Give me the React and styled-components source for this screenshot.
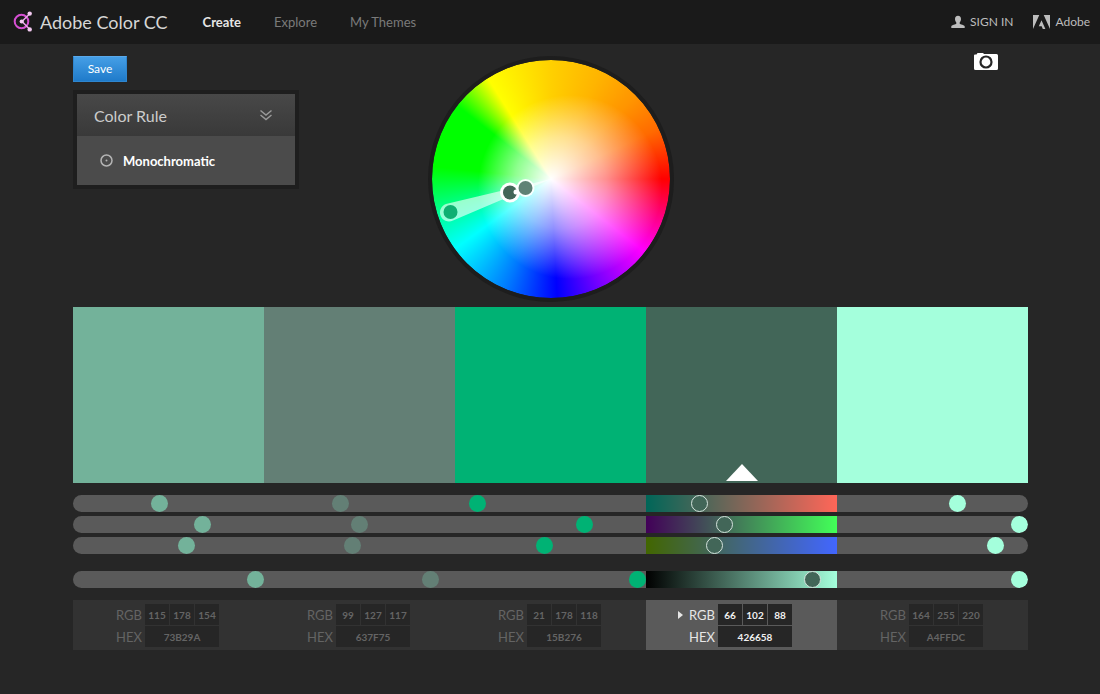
import React, { useState } from "react";
import styled, { createGlobalStyle, css } from "styled-components";

const GlobalStyle = createGlobalStyle`
  * {
    box-sizing: border-box;
  }

  body {
    margin: 0;
    background: #262626;
    color: #ccc;
    font-family: Lato, "Liberation Sans", sans-serif;
    font-size: 13px;
  }

  button, input {
    font-family: inherit;
  }
`

const initialColors = [
  { rgb: [115, 178, 154], hex: "73B29A", level: 100 },
  { rgb: [99, 127, 117], hex: "637F75", level: 91 },
  { rgb: [21, 178, 118], hex: "15B276", fill: "#00b274", level: 100 },
  { rgb: [66, 102, 88], hex: "426658", level: 91 },
  { rgb: [164, 255, 220], hex: "A4FFDC", level: 100 },
]

const channels = ["Red", "Green", "Blue"]

const fillOf = (color) => color.fill || "#" + color.hex

const channelGradient = (rgb, channel) => {
  const from = rgb.map((v, i) => (i === channel ? 0 : v))
  const to = rgb.map((v, i) => (i === channel ? 255 : v))
  return `linear-gradient(to right, rgb(${from.join(",")}), rgb(${to.join(",")}))`
}

/* ---------- header ---------- */

const Header = styled.header`
  display: flex;
  align-items: center;
  height: 44px;
  padding: 0 10px 0 13px;
  background: #1a1a1a;
`

const Brand = styled.h1`
  display: flex;
  align-items: center;
  gap: 7px;
  margin: 0;
  color: #d6d6d6;
  font-size: 18px;
  font-weight: 400;
  line-height: 24px;
  white-space: nowrap;
`

const Nav = styled.nav`
  display: flex;
  flex: 1;
  gap: 33px;
  margin-left: 35px;
`

const NavLink = styled.a`
  color: ${(p) => (p.$current ? "#e6e6e6" : "#7a7a7a")};
  font-size: 13px;
  font-weight: ${(p) => (p.$current ? 700 : 400)};
  line-height: 20px;
  text-decoration: none;
  white-space: nowrap;
`

const Account = styled.div`
  display: flex;
  gap: 20px;
`

const AccountLink = styled.a`
  display: flex;
  align-items: center;
  gap: 5px;
  color: #bdbdbd;
  font-size: 12px;
  line-height: 20px;
  text-decoration: none;
  white-space: nowrap;
`

/* ---------- top part: rule, wheel, camera ---------- */

const Main = styled.main`
  padding: 12px 72px 44px 73px;
`

const Stage = styled.div`
  display: grid;
  grid-template-columns: 1fr auto 1fr;
  align-items: start;
`

const SaveButton = styled.button`
  display: block;
  width: 54px;
  height: 26px;
  padding: 0;
  border: 1px solid #2f86cf;
  border-top-color: #5aa9ea;
  background: linear-gradient(#459fe6, #1f7bca);
  color: #fff;
  font-size: 12px;
  line-height: 24px;
  cursor: pointer;
`

const RulePanel = styled.section`
  width: 226px;
  margin-top: 8px;
  border: 4px solid #1e1e1e;
  background: #4b4b4b;
`

const RuleHeader = styled.button`
  display: flex;
  align-items: center;
  justify-content: space-between;
  width: 100%;
  height: 42px;
  padding: 0 23px 0 17px;
  border: 0;
  background: linear-gradient(#484848, #393939);
  color: #ccc;
  font-size: 16px;
  cursor: pointer;
`

const RuleOption = styled.div`
  display: flex;
  align-items: center;
  gap: 10px;
  height: 49px;
  padding-left: 23px;
  color: #fff;
  font-size: 13px;
  font-weight: 700;
`

const Wheel = styled.div`
  width: 246px;
  height: 246px;
  border: 4px solid #1d1d1d;
  border-radius: 50%;
  background: conic-gradient(
    #ffd000 0deg,
    #ffb400 25deg,
    #ff9400 46deg,
    #ff6a00 65deg,
    #ff0000 90deg,
    #ff00ff 128deg,
    #7800ff 155deg,
    #0000ff 177deg,
    #0078ff 202deg,
    #00ffff 234deg,
    #00ff90 254deg,
    #00ff00 276deg,
    #00ff00 308deg,
    #ffff00 328deg,
    #ffd000 360deg
  ) padding-box;

  svg {
    display: block;
  }
`

const CameraButton = styled.button`
  justify-self: end;
  height: 18px;
  margin: -3px 30px 0 0;
  padding: 0;
  border: 0;
  background: none;
  cursor: pointer;

  svg {
    display: block;
  }
`

/* ---------- swatches and sliders ---------- */

const Swatches = styled.div`
  display: flex;
  height: 176px;
  margin-top: 5px;
`

const Swatch = styled.button`
  display: flex;
  flex: 1;
  align-items: flex-end;
  justify-content: center;
  min-width: 0;
  padding: 0 0 2px;
  border: 0;
  background: ${(p) => p.$fill};
  cursor: pointer;
`

const Sliders = styled.div`
  display: grid;
  gap: 4px;
  margin-top: 12px;
`

const SliderRow = styled.div`
  display: flex;
  height: 17px;
  border-radius: 9px;
  background: #5a5a5a;
  overflow: hidden;

  &:last-child {
    margin-top: 13px;
  }
`

const thumb = css`
  width: 17px;
  height: 17px;
  border: ${(p) => (p.$gradient ? "1px solid #d5e3dd" : "0")};
  border-radius: 50%;
  background: ${(p) => p.$fill};
`

const Slider = styled.input`
  flex: 1;
  min-width: 0;
  height: 17px;
  margin: 0;
  appearance: none;
  background: ${(p) => p.$gradient || "none"};
  cursor: pointer;

  &::-webkit-slider-thumb {
    appearance: none;
    ${thumb}
  }

  &::-moz-range-thumb {
    ${thumb}
  }
`

/* ---------- values ---------- */

const Values = styled.div`
  display: flex;
  margin-top: 12px;
`

const ValueBlock = styled.div`
  display: flex;
  flex: 1;
  justify-content: center;
  min-width: 0;
  height: 50px;
  padding-top: 4px;
  background: ${(p) => (p.$active ? "#5a5a5a" : "#323232")};
  color: ${(p) => (p.$active ? "#e6e6e6" : "#646464")};
`

const ValueGrid = styled.div`
  display: grid;
  grid-template-columns: 10px 28px repeat(3, 24px);
  grid-template-rows: 21px 21px;
  gap: 1px;
  margin-right: 13px;
  align-items: center;
`

const ValueName = styled.label`
  grid-column: 2;
  font-size: 13px;
  line-height: 20px;
`

const ValueInput = styled.input`
  grid-column: ${(p) => (p.$wide ? "3 / 6" : "auto")};
  width: 100%;
  height: 21px;
  padding: 0;
  border: 0;
  background: #262626;
  color: ${(p) => (p.$active ? "#f0f0f0" : "#646464")};
  font-size: 10px;
  font-weight: 700;
  text-align: center;
`

/* ---------- drawings ---------- */

const LogoIcon = () => (
  <svg width="20" height="22" viewBox="0 0 20 22" fill="none" aria-hidden="true">
    <circle cx="8.5" cy="10.5" r="6.8" stroke="#d64fd3" strokeWidth="2" />
    <path d="M16.7 2.8L9 10.5L16.7 18.2" stroke="#eda6ea" strokeWidth="1.5" />
    <circle cx="8.7" cy="10.5" r="2.1" fill="#f3c9f1" />
    <circle cx="16.7" cy="2.6" r="2.2" fill="#f3c9f1" />
    <circle cx="16.7" cy="18.4" r="2.2" fill="#f3c9f1" />
  </svg>
)

const PersonIcon = () => (
  <svg width="14" height="14" viewBox="0 0 14 14" fill="#bdbdbd" aria-hidden="true">
    <path d="M7 .8C9 .8 10.1 2.2 10 4.2C9.9 5.8 9.3 6.6 8.7 7.4V8.8C9.2 9.8 13.3 9.9 13.7 11.3V13H.3V11.3C.7 9.9 4.8 9.8 5.3 8.8V7.4C4.7 6.6 4.1 5.8 4 4.2C3.9 2.2 5 .8 7 .8Z" />
  </svg>
)

const AdobeIcon = () => (
  <svg width="17" height="14" viewBox="0 0 17 14" fill="#bdbdbd" aria-hidden="true">
    <path d="M0 0H6.3L0 14ZM10.7 0H17V14ZM8.5 5.2L12.4 14H9.8L8.7 11.2H5.8Z" />
  </svg>
)

const ChevronsIcon = () => (
  <svg width="12" height="12" viewBox="0 0 12 12" fill="none" stroke="#999" strokeWidth="1.5" aria-hidden="true">
    <path d="M.5 1.5L6 6L11.5 1.5M.5 6L6 10.5L11.5 6" />
  </svg>
)

const MonoIcon = () => (
  <svg width="13" height="13" viewBox="0 0 13 13" aria-hidden="true">
    <circle cx="6.5" cy="6.5" r="5.5" fill="none" stroke="#b4b4b4" strokeWidth="1.5" />
    <circle cx="6.5" cy="6.5" r="1" fill="#b4b4b4" />
  </svg>
)

const CameraIcon = () => (
  <svg width="24" height="18" viewBox="0 0 24 18" aria-hidden="true">
    <path d="M1 1.500H2.500L3.500 0H9L10 1H22.500Q24 1 24 2.500V15.500Q24 17 22.500 17H1.500Q0 17 0 15.500V2.500Q0 1.500 1 1.500Z" fill="#fff" />
    <circle cx="12" cy="9" r="5.5" fill="#fff" stroke="#262626" strokeWidth="2.2" />
  </svg>
)

const Pointer = () => (
  <svg width="32" height="17" viewBox="0 0 32 17" aria-hidden="true">
    <path d="M16 0L32 17H0Z" fill="#fff" />
  </svg>
)

const ActiveMark = () => (
  <svg width="5" height="8" viewBox="0 0 5 8" aria-hidden="true">
    <path d="M0 0L5 4L0 8Z" fill="#e6e6e6" />
  </svg>
)

const WheelOverlay = () => (
  <svg width="238" height="238" viewBox="0 0 238 238" role="img" aria-label="Color wheel">
    <defs>
      <radialGradient id="fade" gradientUnits="userSpaceOnUse" cx="138" cy="127" r="92" fx="119" fy="119">
        <stop offset="0" stopColor="#fff" />
        <stop offset=".5" stopColor="#fff" stopOpacity=".56" />
        <stop offset="1" stopColor="#fff" stopOpacity="0" />
      </radialGradient>
    </defs>
    <circle cx="119" cy="119" r="119" fill="url(#fade)" />
    <path d="M119 119L16 143.500A9 9 0 1 0 21 160.500Z" fill="#fff" fillOpacity=".6" />
    <circle cx="18.500" cy="152" r="7" fill="#0fb072" />
    <circle cx="78" cy="132.500" r="10" fill="#fff" />
    <circle cx="78" cy="132.500" r="7" fill="#426658" />
    <circle cx="93.500" cy="128" r="9" fill="#fff" fillOpacity=".9" />
    <circle cx="84" cy="132" r="2.500" fill="#fff" />
    <circle cx="93.500" cy="128" r="7" fill="#5f8275" />
  </svg>
)

const ColorValues = ({ color, index, active }) => (
  <ValueBlock $active={active}>
    <ValueGrid>
      {active && <ActiveMark />}
      <ValueName htmlFor={`rgb-${index}`}>RGB</ValueName>
      {color.rgb.map((v, c) => (
        <ValueInput
          key={channels[c]}
          id={c === 0 ? `rgb-${index}` : undefined}
          aria-label={channels[c]}
          defaultValue={v}
          $active={active}
        />
      ))}
      <ValueName htmlFor={`hex-${index}`}>HEX</ValueName>
      <ValueInput id={`hex-${index}`} defaultValue={color.hex} $active={active} $wide />
    </ValueGrid>
  </ValueBlock>
)

const App = () => {
  const [selected, setSelected] = useState(3)

  return (
    <>
      <GlobalStyle />
      <Header>
        <Brand><LogoIcon />Adobe Color CC</Brand>
        <Nav>
          <NavLink href="#create" $current>Create</NavLink>
          <NavLink href="#explore">Explore</NavLink>
          <NavLink href="#themes">My Themes</NavLink>
        </Nav>
        <Account>
          <AccountLink href="#signin"><PersonIcon />SIGN IN</AccountLink>
          <AccountLink href="#adobe"><AdobeIcon />Adobe</AccountLink>
        </Account>
      </Header>

      <Main>
        <Stage>
          <div>
            <SaveButton type="button">Save</SaveButton>
            <RulePanel>
              <RuleHeader type="button">Color Rule<ChevronsIcon /></RuleHeader>
              <RuleOption><MonoIcon />Monochromatic</RuleOption>
            </RulePanel>
          </div>
          <Wheel><WheelOverlay /></Wheel>
          <CameraButton type="button" aria-label="Create from image"><CameraIcon /></CameraButton>
        </Stage>

        <Swatches>
          {initialColors.map((color, i) => (
            <Swatch
              key={color.hex}
              type="button"
              aria-label={"#" + color.hex}
              $fill={fillOf(color)}
              onClick={() => setSelected(i)}
            >
              {selected === i && <Pointer />}
            </Swatch>
          ))}
        </Swatches>

        <Sliders>
          {channels.map((name, c) => (
            <SliderRow key={name}>
              {initialColors.map((color, i) => (
                <Slider
                  key={color.hex}
                  type="range"
                  min="0"
                  max="255"
                  defaultValue={color.rgb[c]}
                  aria-label={`${name} of #${color.hex}`}
                  $fill={fillOf(color)}
                  $gradient={selected === i && channelGradient(color.rgb, c)}
                />
              ))}
            </SliderRow>
          ))}
          <SliderRow>
            {initialColors.map((color, i) => (
              <Slider
                key={color.hex}
                type="range"
                min="0"
                max="100"
                defaultValue={color.level}
                aria-label={`Brightness of #${color.hex}`}
                $fill={fillOf(color)}
                $gradient={selected === i && "linear-gradient(to right, #000, #426658 40%, #a4ffdc)"}
              />
            ))}
          </SliderRow>
        </Sliders>

        <Values>
          {initialColors.map((color, i) => (
            <ColorValues key={color.hex} color={color} index={i} active={selected === i} />
          ))}
        </Values>
      </Main>
    </>
  )
}

export default App
